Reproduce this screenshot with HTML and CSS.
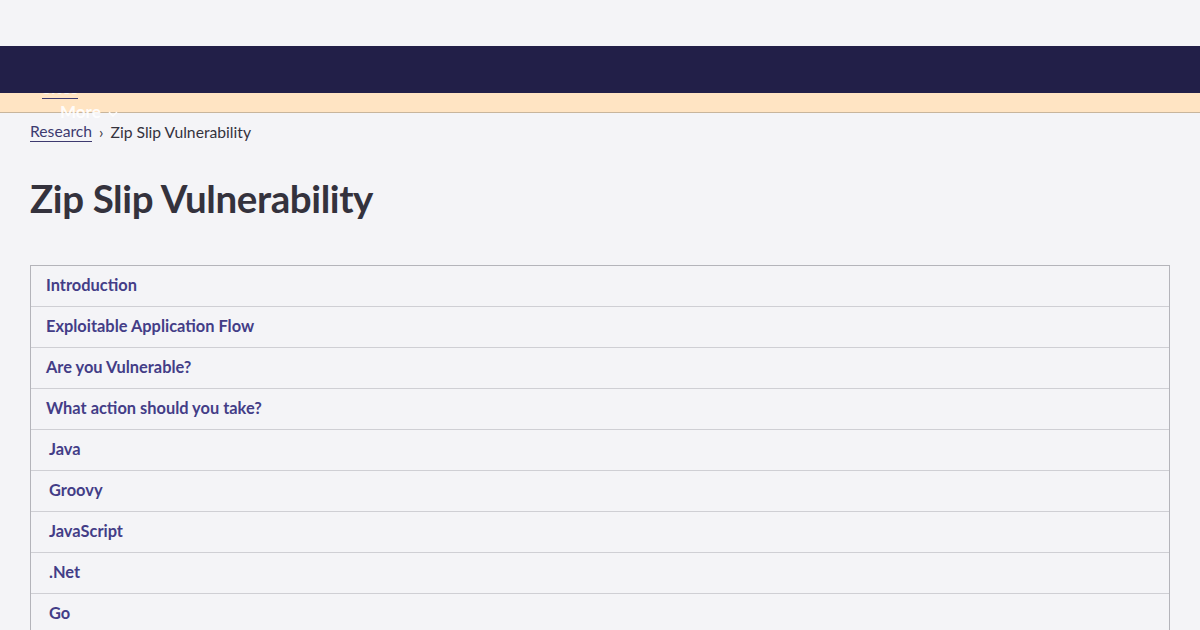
FILE: index.html
```html
<!DOCTYPE html>
<html lang="en">
<head>
<meta charset="utf-8">
<title>Zip Slip Vulnerability</title>
<link rel="stylesheet" href="styles.css">
</head>
<body>
<header class="site-header">
  <div class="topstrip"></div>
  <nav class="mainnav"></nav>
  <div class="banner">
    <a class="nav-sites" href="#">Sites</a>
    <span class="nav-more">More <svg class="chev" width="10" height="6" viewBox="0 0 10 6"><path d="M1 1l4 4 4-4" fill="none" stroke="#fff" stroke-width="1.4"/></svg></span>
  </div>
</header>
<main class="content">
  <div class="breadcrumb"><a href="#">Research</a><span class="sep">›</span><span>Zip Slip Vulnerability</span></div>
  <h1 class="title">Zip Slip Vulnerability</h1>
  <ul class="toc">
    <li><a href="#">Introduction</a></li>
    <li><a href="#">Exploitable Application Flow</a></li>
    <li><a href="#">Are you Vulnerable?</a></li>
    <li><a href="#">What action should you take?</a></li>
    <li class="sub"><a href="#">Java</a></li>
    <li class="sub"><a href="#">Groovy</a></li>
    <li class="sub"><a href="#">JavaScript</a></li>
    <li class="sub"><a href="#">.Net</a></li>
    <li class="sub"><a href="#">Go</a></li>
  </ul>
</main>
</body>
</html>
```
FILE: styles.css
```css
html, body {
  margin: 0;
  padding: 0;
  background: #f4f4f7;
  font-family: Lato, "Open Sans", sans-serif;
  color: #34323d;
  overflow: hidden;
  height: 630px;
}
.topstrip { height: 46px; background: #f4f4f7; }
.mainnav { position: relative; z-index: 1; height: 47px; background: #221f48; }
.banner {
  position: relative;
  height: 19px;
  background: #ffe4c3;
  border-bottom: 1px solid #c8b59c;
}
.nav-sites {
  position: absolute;
  left: 42px;
  top: -15px;
  font-size: 17px;
  line-height: 20px;
  font-weight: 700;
  color: rgba(255,255,255,0.85);
  text-decoration: none;
  border-bottom: 1px solid #3d3a70;
  z-index: 0;
}
.nav-more {
  position: absolute;
  left: 60px;
  top: 12px;
  font-size: 17px;
  line-height: 14px;
  font-weight: 700;
  color: #fff;
  z-index: 2;
  opacity: 0.9;
}
.chev { margin-left: 3px; vertical-align: middle; }
.content { padding: 0 30px; }
.breadcrumb {
  margin-top: 9px;
  font-size: 15.7px;
  line-height: 20px;
  display: flex;
  align-items: center;
}
.breadcrumb a {
  color: #3d3a70;
  text-decoration: none;
  border-bottom: 1px solid #3d3a70;
  line-height: 19px;
}
.breadcrumb .sep { margin: 0 7px; }
.title {
  margin: 33px 0 0;
  font-size: 38.5px;
  line-height: 46px;
  font-weight: 700;
  color: #34323d;
  letter-spacing: -0.4px;
}
.toc {
  list-style: none;
  margin: 44px 0 0;
  padding: 0;
  border: 1px solid #b4b4ba;
  border-bottom: none;
}
.toc li {
  height: 40px;
  box-sizing: border-box;
  border-bottom: 1px solid #cfcfd4;
  display: flex;
  align-items: center;
  padding: 0 0 3px 15px;
  height: 41px;
}
.toc li.sub { padding-left: 18px; }
.toc a {
  color: #433d87;
  font-weight: 700;
  font-size: 16.4px;
  text-decoration: none;
}
```
